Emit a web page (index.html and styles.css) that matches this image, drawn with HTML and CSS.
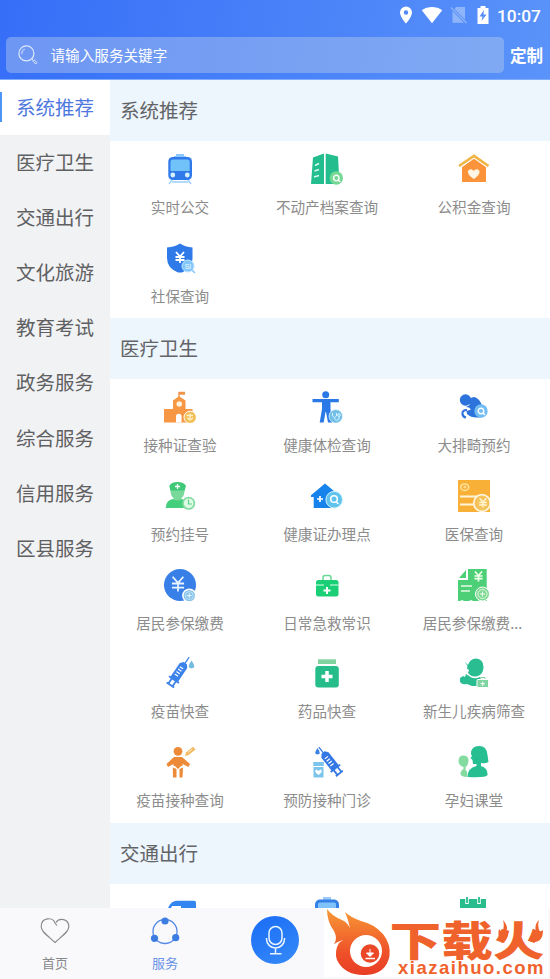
FILE: index.html
```html
<!DOCTYPE html>
<html lang="zh-CN">
<head>
<meta charset="utf-8">
<title>服务</title>
<link rel="stylesheet" href="styles.css">
</head>
<body>
<svg class="defs" width="0" height="0">
  <defs>
    <g id="yuan" fill="none" stroke="currentColor"><path d="M-4-5L0-.5L4-5M0-.5V6M-4.5 0H4.5M-4.5 3H4.5"/></g>
    <g id="lens"><circle r="6.7" fill="currentColor"/><circle r="2.8" fill="none" stroke="#fff" stroke-width="1.4"/><path d="M2 2L4 4" stroke="#fff" stroke-width="1.4"/></g>
    <g id="syringe">
      <path d="M0-19V-10" stroke="currentColor" stroke-width="1.3"/>
      <path d="M-2-12H2L4.500-9V8H-4.500V-9Z" fill="currentColor"/>
      <path d="M-6 8H6M-2.5 8V14M2.5 8V14M-4.5 14.500H4.5" fill="none" stroke="currentColor" stroke-width="1.8"/>
      <path d="M-2.500-6H1.500M-2.500-3H1.500M-2.500 0H1.500M-2.500 3H1.500" stroke="#fff" stroke-width="1.2"/>
    </g>
  </defs>
</svg>
<header class="top">
  <div class="status">
    <svg width="14" height="18" viewBox="0 0 14 18"><path fill-rule="evenodd" fill="#fff" d="M7 .5A6 6 0 0 0 1 6.5C1 11 7 17.5 7 17.5S13 11 13 6.5A6 6 0 0 0 7 .5ZM7 4.3A2.2 2.2 0 1 1 7 8.7A2.2 2.2 0 0 1 7 4.3Z"/></svg>
    <svg width="22" height="18" viewBox="0 0 22 18"><path fill="#fff" d="M.8 4.2C7-.2 15-.2 21.2 4.2L11 17.2Z"/></svg>
    <svg class="nosim" width="18" height="18" viewBox="0 0 18 18"><path fill="#8eb4f9" d="M6 1H15V13.5L4.5 3ZM2.5 5L14 16.7H2.5Z"/><path d="M1 1.5L16.5 17" stroke="#8eb4f9" stroke-width="1.3"/></svg>
    <svg width="14" height="18" viewBox="0 0 14 18"><path fill="#fff" fill-rule="evenodd" d="M4.5 0H9.5V2H12.5V18H1.5V2H4.5ZM8 4L3.5 10.5H6.5L5.5 15L10.5 8.5H7.5Z"/></svg>
    <span class="time">10:07</span>
  </div>
  <div class="searchbar">
    <div class="search">
      <svg width="20" height="20" viewBox="0 0 20 20" fill="none" stroke="#dbe8ff"><circle cx="8.4" cy="8.4" r="7.5" stroke-width="1.2"/><path d="M3.8 9A4.7 4.7 0 0 1 6.8 4M13.5 13.5L15 15" /><path d="M14.7 16L16 14.7L19 17.5L17.7 19Z"/></svg>
      <span>请输入服务关键字</span>
    </div>
    <b>定制</b>
  </div>
</header>
<main class="main">
  <aside class="side">
    <div class="on">系统推荐</div><div>医疗卫生</div><div>交通出行</div><div>文化旅游</div><div>教育考试</div><div>政务服务</div><div>综合服务</div><div>信用服务</div><div>区县服务</div>
  </aside>
  <div class="content">
    <h2>系统推荐</h2>
    <section class="grid">
      <div class="cell"><svg viewBox="0 0 32 32"><path d="M12 1H20V3H22V5H10V3H12Z" fill="#8ec8fb"/><path d="M8 27L5 31M24 27L27 31M8 29H24" stroke="#9bcdfa" stroke-width="1.3"/><rect x="4.3" y="4" width="23.7" height="23" rx="4.5" fill="#3079ea"/><path d="M8.500 6.500H24Q25.700 6.500 25.700 9V18H6.500V9Q6.500 6.500 8.500 6.500Z" fill="#72c2fa"/><g fill="#d5f1ff"><circle cx="8.8" cy="22" r="2.4"/><circle cx="23.300" cy="22" r="2.4"/></g></svg><span>实时公交</span></div>
      <div class="cell"><svg viewBox="0 0 32 32"><path d="M2 4.500L13 .5V31H0Z M14.700 .5L27 3.500L28.500 31H14.700Z" fill="#24be8e"/><path d="M4 12.500L8 10.500M3.500 18L8 16.500M3 24L8 22.500" stroke="#d4fae9" stroke-width="1.800"/><use href="#lens" x="25.300" y="25" color="#75d894"/></svg><span>不动产档案查询</span></div>
      <div class="cell"><svg viewBox="0 0 32 32"><path d="M4 14L16 5.500L28 14V29H4Z" fill="#fa9339"/><path d="M1 13.500L16 3L31 13.500" fill="none" stroke="#fff" stroke-width="4"/><path d="M1 13L16 2.800L30.500 13" fill="none" stroke="#f0b545" stroke-width="2.700"/><path d="M15.800 26C4.500 19 12.500 13.500 15.800 18C19 13.500 27 19 15.800 26Z" fill="#fff5e5"/></svg><span>公积金查询</span></div>
      <div class="cell"><svg viewBox="0 0 32 32"><path d="M16 1.500Q21 5 28.500 5.500V17Q28 27 18 30.500H14Q3 26 3 16V5.500Q11 5 16 1.500Z" fill="#2f7ae9"/><use href="#yuan" x="16" y="15" color="#fff" stroke-width="1.800"/><circle cx="24" cy="24" r="6" fill="#83c7fa" stroke="#bde5ff"/><path d="M28 28L31 31" stroke="#83c7fa" stroke-width="1.500"/><text x="24" y="26.500" text-anchor="middle" class="si">SI</text></svg><span>社保查询</span></div>
    </section>
    <h2>医疗卫生</h2>
    <section class="grid">
      <div class="cell"><svg viewBox="0 0 32 32"><path d="M14.300 9V.7H21V3.800H15.700V9Z" fill="#ee954b"/><path d="M15 5.200L21.500 9.500V18H28.500V31.500H0V18H9V9.500Z" fill="#f79643"/><circle cx="15.300" cy="13" r="2.800" fill="#fff1df"/><path d="M12 31.500V25.500A2.800 2.800 0 0 1 17.600 25.500V31.500Z" fill="#fff"/><circle cx="26.200" cy="26.300" r="6.200" fill="#f1bf55" stroke="#fff"/><path d="M22.500 24.500H29M26 22.500V28M23 27L26 29L29 27" stroke="#fff2c7" stroke-width="1.300" fill="none"/></svg><span>接种证查验</span></div>
      <div class="cell"><svg viewBox="0 0 32 32"><g fill="#2b79e7"><circle cx="14.700" cy="3.700" r="3.500"/><path d="M1.500 8H27.800V11.300H19.500V18L21 31.500H17L15 21H14.500L12.700 31.500H8.700L11 18V11.300H1.500Z"/></g><circle cx="24.800" cy="25.300" r="6.800" fill="#73bfe8" stroke="#fff" stroke-width=".6"/><path d="M21.500 22V25Q23.500 28 25.500 25V22M23.500 27Q25 31 28 28V25" stroke="#d3f4ff" fill="none"/><circle cx="28" cy="24" r="1.300" fill="none" stroke="#d3f4ff"/></svg><span>健康体检查询</span></div>
      <div class="cell"><svg viewBox="0 0 32 32"><g fill="#2d73dc"><circle cx="7.500" cy="9" r="5.700"/><path d="M11 9Q15 3.500 20 8Q24 12 24 16V26Q14 28 9 23L8.500 20L13 18.500L11 16.500L8 16L11.500 14Z"/><path d="M9 19Q4 19 4.500 23Q5 26 8 26.500" fill="none" stroke="#2d73dc" stroke-width="2.200"/></g><use href="#lens" x="23" y="20" color="#72bdf4"/></svg><span>大排畸预约</span></div>
      <div class="cell"><svg viewBox="0 0 32 32"><path d="M6.500 11L5.300 6Q7 2 13.500 2Q20 2 22 6L20.500 11Z" fill="#3fc878"/><path d="M6.500 10.500H20.500Q20.500 16 17.500 18V21H9.500V18Q6.500 16 6.500 10.500Z" fill="#79d99b"/><path d="M1.700 28Q2 20 9 19Q13.500 22 18 19Q24 21 25 28Z" fill="#43cf7b"/><path d="M13.500 4V9M11 6.500H16" stroke="#fff" stroke-width="1.300"/><circle cx="24.700" cy="23.300" r="5.700" fill="#dcfae4" stroke="#82dba0" stroke-width="1.700"/><path d="M24.500 19.500V24H28" fill="none" stroke="#5cd18a" stroke-width="1.200"/></svg><span>预约挂号</span></div>
      <div class="cell"><svg viewBox="0 0 32 32"><path d="M14 3.500L28 15.300L26 17V28H2.700V17H0V15.300Z" fill="#1682ec"/><path d="M9 16V22M6 19H12" stroke="#fff" stroke-width="1.700"/><circle cx="23.200" cy="19.700" r="8.300" fill="#5fc3ed" stroke="#d7f5ff"/><circle cx="23" cy="19" r="3.300" fill="none" stroke="#fff" stroke-width="1.500"/><path d="M25 21.500L27.500 24" stroke="#fff" stroke-width="1.500"/></svg><span>健康证办理点</span></div>
      <div class="cell"><svg viewBox="0 0 32 32"><path d="M0 0H32V32H0Z" fill="#f8b036"/><ellipse cx="6.700" cy="7.200" rx="4" ry="3.300" fill="none" stroke="#ffe8a7" stroke-width="1.400"/><path d="M5 7H8.500M7 5.500V8.500" stroke="#ffe8a7"/><path d="M2 16.500H20M2 24.500H18" stroke="#fff5da" stroke-width="2"/><circle cx="24" cy="23" r="8.300" fill="#f4c258" stroke="#fff5df" stroke-width="1.700"/><g transform="translate(25 22.500) scale(.85)"><use href="#yuan" color="#fff4d0" stroke-width="1.700"/></g></svg><span>医保查询</span></div>
      <div class="cell"><svg viewBox="0 0 32 32"><circle cx="16" cy="16" r="16" fill="#397fe8"/><g transform="translate(14 14.500) scale(1.350)"><use href="#yuan" color="#e9f6ff" stroke-width="1.300"/></g><circle cx="25.300" cy="26.600" r="7.200" fill="#fff"/><circle cx="25.300" cy="26.600" r="5.700" fill="#88c2e9"/><circle cx="25.300" cy="26.600" r="4" fill="none" stroke="#d2f0ff" stroke-width=".7"/><path d="M25.300 24V29M22.800 26.600H27.800" stroke="#e5f8ff"/></svg><span>居民参保缴费</span></div>
      <div class="cell"><svg viewBox="0 0 32 32"><path d="M12 11V9Q12 6.500 14 6.500H18Q20 6.500 20 9V11" fill="none" stroke="#68d996" stroke-width="1.500"/><rect x="5" y="11" width="22.500" height="16.500" rx="2.500" fill="#1bcf77"/><path d="M5 16H13M19 16H27.500" stroke="#dcffec"/><path d="M16 18V25M12.500 21.500H19.500" stroke="#fff" stroke-width="2"/></svg><span>日常急救常识</span></div>
      <div class="cell"><svg viewBox="0 0 32 32"><path d="M10 0H28.700V32H24L22 31L20 32H15L13 31L11 32H6L4 31L2 32H0V11H10Z M8 1V9H1Z" fill="#4dcf78"/><g transform="translate(20.500 7) scale(.9)"><use href="#yuan" color="#efffe8" stroke-width="1.900"/></g><path d="M3 17H14M3 22H12" stroke="#e3fae3" stroke-width="1.500"/><circle cx="24.500" cy="25" r="7" fill="#80d795" stroke="#fff"/><circle cx="24.500" cy="25" r="4.500" fill="none" stroke="#dcffdf"/><path d="M24.500 22.500V27.500M22 25H27" stroke="#efffed"/></svg><span class="more">居民参保缴费...</span></div>
      <div class="cell"><svg viewBox="0 0 32 32"><g transform="translate(14.500 16) rotate(34)"><use href="#syringe" color="#3b82eb"/></g><path d="M27.500 3.500Q33 11 27.500 11.500Q22 11 27.500 3.500Z" fill="#75bbdf"/></svg><span>疫苗快查</span></div>
      <div class="cell"><svg viewBox="0 0 32 32"><path d="M7 2.300H25V7H7Z" fill="#80d4a0"/><rect x="4.300" y="9" width="23.500" height="21.500" rx="3" fill="#26bd8b"/><path d="M16 14V25M10.500 19.500H21.500" stroke="#fff" stroke-width="3.500"/></svg><span>药品快查</span></div>
      <div class="cell"><svg viewBox="0 0 32 32"><g fill="#2abd91"><path d="M6.500 4.500L10 8Q12 1.500 18 1.500Q25.500 2 25.500 10Q25.500 15 22 18Q15 22 10 16L11 13L9 11.500L9.500 9Z"/><path d="M2 21L5 19L7 20L8 17L11 19Q16 23 22 20V29H14L9 27Q4 28 2 25Z"/></g><rect x="19" y="22.500" width="11.500" height="8" rx="1" fill="#80d4a1" stroke="#fff"/><path d="M22.500 22V20.500H27V22" fill="none" stroke="#80d4a1"/><path d="M24.700 24.500V29M22.500 26.700H27" stroke="#fff"/></svg><span>新生儿疾病筛查</span></div>
      <div class="cell"><svg viewBox="0 0 32 32"><g fill="#ed8a38"><circle cx="14" cy="5.300" r="4.400"/><path d="M10 11H18L26 18L24.500 21L18.500 18V20H9.500V18L4 21L2.500 18Z"/><path d="M8.800 21.500L12.500 23V31.500H9ZM19 21.500L15.500 23V31.500H18.500ZM11 20H17L14 23Z"/></g><path d="M21 10L22 6.500L29 .7L31.500 3.500L24.500 9Z" fill="#f2b75d"/><path d="M24 6.500L28.500 3" stroke="#fff1cf"/></svg><span>疫苗接种查询</span></div>
      <div class="cell"><svg viewBox="0 0 32 32"><path d="M2.300 16H12.800V20H2.300ZM2.500 21H12.500V31.500H2.500Z" fill="#7bc5ed"/><path d="M7.500 29Q2 25 5.500 23.500L7.500 25L9.500 23.500Q13 25 7.500 29Z" fill="#fff"/><g transform="translate(19.500 16) rotate(-38)"><use href="#syringe" color="#3378e5"/></g><path d="M6.500 2Q11 8.500 6.500 8.500Q2 8.500 6.500 2Z" fill="#3b82e6"/></svg><span>预防接种门诊</span></div>
      <div class="cell"><svg viewBox="0 0 32 32"><path d="M.5 14.500Q1 9 6 9.500Q11 10 10.500 15Q10 20 7.500 21V24Q10 25 9 31Q2 31 2.500 27Q3 24 5.500 23V21Q.5 20 .5 14.500Z" fill="#84dba0"/><path d="M13 8Q13 0 21 0Q29 0 29.500 9L30.500 16Q27 18 23 17V20Q30 22 29.500 29Q28 32 9.500 31Q9.500 22 18.500 20V18H15L14.500 14L12.500 12L14 10Z" fill="#27be91"/></svg><span>孕妇课堂</span></div>
    </section>
    <h2>交通出行</h2>
    <section class="grid">
      <div class="cell"><svg viewBox="0 0 32 32"><path d="M3 15Q6 4.700 13 4.700H30Q32 4.700 32 7V20H3Z" fill="#3385f0"/><path d="M8 10H17V16H5Z" fill="#fff"/></svg></div>
      <div class="cell"><svg viewBox="0 0 32 32"><path d="M12 1H20V4H12Z" fill="#9bcbfa"/><rect x="4" y="3.500" width="24" height="24" rx="5" fill="#3480e7"/><path d="M7 8Q7 6.500 9 6.500H23Q25 6.500 25 8V18H7Z" fill="#80c3fb"/></svg></div>
      <div class="cell"><svg viewBox="0 0 32 32"><path d="M2 3H28V28H2Z" fill="#29bd8d"/><path d="M9 0V8M21 0V8" stroke="#fff" stroke-width="3.500"/><path d="M9 1V7M21 1V7" stroke="#29bd8d" stroke-width="1.800"/></svg></div>
    </section>
  </div>
</main>
<nav class="tabs">
  <div class="tab"><svg width="30" height="28" viewBox="0 0 30 28" fill="none" stroke="#8a8b8e" stroke-width="1.200"><path d="M17 8.500L15 6C13-.5 1.200.5 1.200 9.500C1.200 14 5 16.500 15 25.500C25 16.500 28.800 14 28.800 9.500C28.800 2 19 0 16 5.500"/></svg><span>首页</span></div>
  <div class="tab on"><svg width="30" height="28" viewBox="0 0 30 28"><circle cx="15" cy="14.500" r="12" fill="none" stroke="#568ae6" stroke-width="1.300"/><g fill="#3c7de2"><circle cx="15" cy="4" r="3.600"/><circle cx="4.500" cy="21.300" r="3.600"/><circle cx="25.700" cy="20.700" r="3.600"/></g></svg><span>服务</span></div>
  <div class="mic"><svg width="48" height="48" viewBox="0 0 48 48" fill="none" stroke="#eaf5ff" stroke-width="1.500"><rect x="18" y="10.500" width="13" height="18" rx="6.500"/><path d="M15.500 22V23A9 9 0 0 0 33.500 23V22M24.500 32V37.500M19 37.700H30.500"/></svg></div>
  <svg class="brand" width="226" height="71" viewBox="324 908 226 71">
    <defs><linearGradient id="fire" x2="0" y2="1"><stop stop-color="#f69a36"/><stop offset=".65" stop-color="#ef5229"/><stop offset="1" stop-color="#e83d25"/></linearGradient></defs>
    <path d="M324 908H548V977H324Z" fill="#fff"/>
    <path d="M327 909Q332 916 342 920Q347 922 350 928Q348 919 345 912Q350 917 361 921Q374 924 383 934Q391 944 389.500 956Q386 974 366 975Q345 976 337 960Q334 951 339 943L343 940Q337 942 334 944Q338 939 334 931Q327 922 327 909Z" fill="url(#fire)"/>
    <circle cx="366" cy="951" r="16" fill="#fff"/><circle cx="370" cy="953.500" r="9.300" fill="#ea4827"/>
    <path d="M370 949V954M366.500 953H373.500L370 956.500Z" fill="#fff" stroke="#fff"/><path d="M365.500 958.500H375" stroke="#fff" stroke-width="1.500"/>
    <text class="brand-cn" x="389.500" y="956" textLength="155" lengthAdjust="spacingAndGlyphs">下载火</text>
    <path d="M503 920Q509 927 506 931L508 930Q509 939 502 943Q497 939 499 929L502 932Q505 927 503 920ZM539 920Q534 925 536 931L533 929Q530 936 534 942Q543 942 543 930L540 932Q537 927 539 920Z" fill="#f0622b"/>
    <text class="brand-url" x="398" y="974" textLength="145.500">xiazaihuo.com</text>
  </svg>
</nav>
</body>
</html>
```
FILE: styles.css
```css
* { box-sizing: border-box; }
body {
  margin: 0;
  width: 550px;
  height: 979px;
  overflow: hidden;
  display: flex;
  flex-direction: column;
  background: #fff;
  font-family: "Noto Sans CJK SC", sans-serif;
}
svg { display: block; flex: none; }
.defs { position: absolute; }

.top {
  height: 80px;
  flex: none;
  background: linear-gradient(100deg, #366ef8, #5a93f9);
  border-bottom: 1px solid #80adfb;
  color: #fff;
}
.status {
  height: 37px;
  padding: 6px 9px 0 0;
  display: flex;
  justify-content: flex-end;
  align-items: flex-start;
}
.status svg:nth-child(2) { margin-left: 8px; }
.status .nosim { margin-left: 7px; }
.status svg:nth-child(4) { margin-left: 8px; }
.time { font: 500 17.3px/20px Roboto, sans-serif; margin-left: 7.5px; width: 44px; white-space: nowrap; }
.searchbar { display: flex; align-items: center; padding-left: 6px; }
.search {
  width: 498px;
  height: 36px;
  border-radius: 5px;
  background: rgba(185, 205, 235, .42);
  display: flex;
  align-items: center;
  gap: 12.5px;
  padding: 0 0 1px 12px;
  font-size: 14.6px;
}
.searchbar b { margin-left: 6px; font-size: 16.6px; font-weight: 700; white-space: nowrap; }

.main { flex: 1; min-height: 0; display: flex; overflow: hidden; }
.side { width: 110px; flex: none; background: #f1f2f4; z-index: 1; }
.side div {
  height: 55.1px;
  line-height: 54px;
  text-align: center;
  font-size: 19.5px;
  color: #5f6062;
}
.side .on {
  color: #4f79de;
  background: linear-gradient(#4c94f6, #4c94f6) 0 12px / 2px 30px no-repeat #fff;
}
.content { width: 440px; flex: none; }
h2 {
  margin: 0;
  height: 60.75px;
  padding-left: 10px;
  background: #edf5fd;
  font-size: 19.5px;
  font-weight: 400;
  line-height: 60.5px;
  color: #626467;
}
.grid {
  display: grid;
  grid-template-columns: repeat(3, 147px);
  grid-auto-rows: 88.75px;
  margin-left: -3.5px;
}
.cell {
  display: flex;
  flex-direction: column;
  align-items: center;
  padding-top: 12.2px;
  font-size: 14.6px;
  line-height: 22px;
  color: #8c8c8c;
  white-space: nowrap;
}
.cell svg { width: 32px; height: 32px; margin-bottom: 11px; }
.cell .more { margin-right: 3px; }
.si { font: 7px "Liberation Sans", sans-serif; fill: #eafaff; }

.tabs { height: 71px; flex: none; display: flex; background: #f9f9fb; z-index: 2; }
.tab {
  width: 110px;
  padding-top: 9px;
  display: flex;
  flex-direction: column;
  align-items: center;
  font-size: 13px;
  line-height: 18px;
  color: #87888c;
}
.tab svg { margin-bottom: 8.5px; }
.tab.on { color: #6993e6; }
.mic {
  width: 48px;
  height: 48px;
  margin: 8px 25px 0 31px;
  border-radius: 50%;
  background: linear-gradient(150deg, #1a6cf5, #368af8);
}
.brand-cn { font: 900 41px "Noto Sans CJK SC", sans-serif; fill: #f0622b; }
.brand-url { font: 700 18.5px "Liberation Sans", sans-serif; fill: #ef622d; }
```
